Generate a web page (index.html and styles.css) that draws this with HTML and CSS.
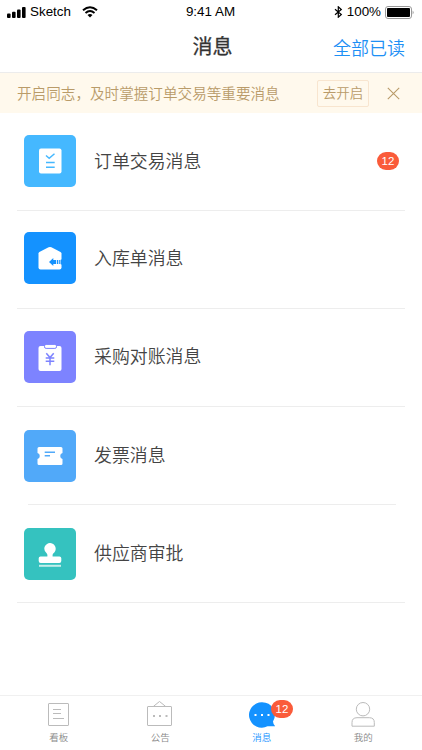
FILE: index.html
```
<!DOCTYPE html>
<html lang="zh-CN">
<head>
  <meta charset="UTF-8">
  <meta name="viewport" content="width=device-width, initial-scale=1.0">
  <title>消息</title>
  <link rel="stylesheet" href="styles.css">
</head>
<body>
  <div class="status">
    <div class="status-left">
      <svg width="19" height="11" viewBox="0 0 19 11">
        <rect x="0" y="6.5" width="3.6" height="4.5" rx="1"/>
        <rect x="5" y="4.7" width="3.6" height="6.3" rx="1"/>
        <rect x="10" y="2.5" width="3.6" height="8.5" rx="1"/>
        <rect x="15" y="0" width="3.6" height="11" rx="1"/>
      </svg>
      <span class="carrier">Sketch</span>
      <svg class="wifi" width="16" height="12" viewBox="0 0 16 12">
        <path d="M1 4.3Q8-1.7 15 4.3M3.5 6.9Q8 3.2 12.5 6.9" fill="none" stroke="#000" stroke-width="2"/>
        <path d="M5.5 9Q8 7 10.5 9L8 11.6Z"/>
      </svg>
    </div>
    <span class="time">9:41 AM</span>
    <div class="status-right">
      <svg width="9" height="12" viewBox="0 0 9 12">
        <path d="M1 3.3L7.3 8.5L4.3 11.2V.8L7.3 3.5L1 8.7" fill="none" stroke="#000" stroke-width="1.2"/>
      </svg>
      <span class="percent">100%</span>
      <svg width="29" height="13" viewBox="0 0 29 13">
        <rect x=".5" y=".5" width="26" height="12" rx="2.5" fill="none" stroke="#999"/>
        <rect x="2" y="2" width="23" height="9" rx="1"/>
        <path d="M27.6 4.5Q29.6 6.5 27.6 8.5Z" fill="#999"/>
      </svg>
    </div>
  </div>

  <header class="header">
    <h1>消息</h1>
    <a class="read-all">全部已读</a>
  </header>

  <div class="notice">
    <span class="notice-text">开启同志，及时掌握订单交易等重要消息</span>
    <a class="notice-btn">去开启</a>
    <svg class="close" width="13" height="13" viewBox="0 0 13 13">
      <path d="M.8.8L12.2 12.2M12.2.8L.8 12.2" fill="none" stroke="#b99b69" stroke-width="1.1"/>
    </svg>
  </div>

  <main class="list">
    <div class="item">
      <div class="icon order">
        <svg width="52" height="52" viewBox="0 0 52 52">
          <rect x="15" y="13.5" width="22.5" height="25" rx="2" fill="#fff"/>
          <path d="M22 20.5L25.2 23.3L30.5 18.8M22 27.5H30.7M22 32.3H30.7" fill="none" stroke="#45b8ff" stroke-width="1.5"/>
        </svg>
      </div>
      <span class="name">订单交易消息</span>
      <span class="badge">12</span>
    </div>
    <div class="item high">
      <div class="icon stock">
        <svg width="52" height="52" viewBox="0 0 52 52">
          <path d="M14.5 21.6Q14.5 20.6 15.4 20L24.6 15.3Q26 14.6 27.4 15.3L36.5 20Q37.5 20.6 37.5 21.6V35.5Q37.5 37.5 35.5 37.5H16.5Q14.5 37.5 14.5 35.5Z" fill="#fff"/>
          <path d="M25 30L29.3 26V28H32.2V32H29.3V34ZM33 28H34.3V32H33ZM35.2 28H36.3V32H35.2ZM36.8 27.5H38V32.5H36.8Z" fill="#1492ff"/>
        </svg>
      </div>
      <span class="name">入库单消息</span>
    </div>
    <div class="item">
      <div class="icon bill">
        <svg width="52" height="52" viewBox="0 0 52 52">
          <rect x="14.5" y="15" width="23" height="25" rx="2" fill="#fff"/>
          <rect x="20.5" y="13.4" width="12" height="4" rx="1.6" fill="#fff" stroke="#7d83ff"/>
          <path d="M22.3 22.3L26 26.5L29.7 22.3M21.7 27H30.3M21.7 30.2H30.3M26 26.5V34.3" fill="none" stroke="#7d83ff" stroke-width="1.5"/>
        </svg>
      </div>
      <span class="name">采购对账消息</span>
    </div>
    <div class="item low inset">
      <div class="icon invoice">
        <svg width="52" height="52" viewBox="0 0 52 52">
          <path d="M15 17H37Q38.5 17 38.5 18.5V23Q36.2 23.5 36.2 26T38.5 29V33.5Q38.5 35 37 35H15Q13.5 35 13.5 33.5V29Q15.8 28.5 15.8 26T13.5 23V18.5Q13.5 17 15 17Z" fill="#fff"/>
          <path d="M20.7 22.2H31M20.7 25.7H26" fill="none" stroke="#51a9f9" stroke-width="1.4"/>
        </svg>
      </div>
      <span class="name">发票消息</span>
    </div>
    <div class="item low">
      <div class="icon supplier">
        <svg width="52" height="52" viewBox="0 0 52 52">
          <path d="M20.3 20.8A5.7 5.7 0 1 1 29.2 25.5Q28.3 26.3 28.6 28.5H35.5Q37.3 28.5 37.3 30.3V33Q37.3 35 35.3 35H16.7Q14.7 35 14.7 33V30.3Q14.7 28.5 16.5 28.5H23.4Q23.7 26.3 22.8 25.5Q20.3 23.8 20.3 20.8Z" fill="#fff"/>
          <path d="M15 37.8H37" stroke="#c5eeeb" stroke-width="2"/>
        </svg>
      </div>
      <span class="name">供应商审批</span>
    </div>
  </main>

  <nav class="tabs">
    <a class="tab">
      <svg width="28" height="28" viewBox="0 0 28 28">
        <rect x="3.5" y="3.5" width="20" height="22" rx=".5"/>
        <path d="M8 9.5H16M8 13.5H16M8 18.5H19"/>
      </svg>
      <span>看板</span>
    </a>
    <a class="tab">
      <svg width="28" height="28" viewBox="0 0 28 28">
        <rect x="1.5" y="6.5" width="24" height="19" rx=".5"/>
        <path d="M7.5 6.3L13.5 1.5L19.5 6.3"/>
        <path class="dots" d="M7 16H9M13 16H15M19.5 16H21.5"/>
      </svg>
      <span>公告</span>
    </a>
    <a class="tab active">
      <svg width="28" height="28" viewBox="0 0 28 28">
        <path class="bubble" d="M14 2.3A12.7 12.7 0 1 0 19.5 26.3H27.2Q25.3 25 25 21.5A12.7 12.7 0 0 0 14 2.3Z"/>
        <path class="dots" d="M6.5 15H8.5M13 15H15M19.5 15H21.5"/>
      </svg>
      <span>消息</span>
      <span class="badge tab-badge">12</span>
    </a>
    <a class="tab">
      <svg width="28" height="28" viewBox="0 0 28 28">
        <circle cx="14" cy="9.2" r="6.7"/>
        <path d="M3 26.2V22.5Q3 17.7 8 17.7H20.3Q25.3 17.7 25.3 22.5V26.2Z"/>
      </svg>
      <span>我的</span>
    </a>
  </nav>
</body>
</html>
```

FILE: styles.css
```
* {
  box-sizing: border-box;
}
body {
  margin: 0;
  height: 750px;
  display: flex;
  flex-direction: column;
  overflow: hidden;
  font-family: "Liberation Sans", "Noto Sans CJK SC", sans-serif;
  font-weight: 350;
  color: #444;
  background-color: #fff;
}
svg {
  display: block;
  flex: none;
}
.status {
  display: grid;
  grid-template-columns: 1fr auto 1fr;
  align-items: center;
  height: 24px;
  padding: 0 8px 0 7px;
  font-size: 13.4px;
  line-height: 24px;
  color: #000;
}
.status-left, .status-right {
  display: flex;
  align-items: center;
}
.status-right {
  justify-content: flex-end;
}
.carrier {
  margin: 0 11px 0 4px;
}
.percent {
  margin: 0 4px 0 4px;
}
.header {
  display: grid;
  grid-template-columns: 1fr auto 1fr;
  align-items: center;
  height: 49px;
  padding: 0 17px;
  border-bottom: 1px solid #ececec;
}
h1 {
  grid-column: 2;
  margin: 0 0 2px 3px;
  font-size: 20px;
  line-height: 30px;
  font-weight: 400;
  -webkit-text-stroke: 0.3px #333;
  color: #333;
}
.read-all {
  justify-self: end;
  margin-bottom: 2px;
  font-size: 18px;
  color: #1e90f5;
}
.notice {
  display: flex;
  align-items: center;
  height: 40px;
  padding: 0 22px 0 17px;
  font-size: 14.6px;
  color: #b99b69;
  background-color: #fff9ed;
}
.notice-text {
  margin-bottom: 2px;
  white-space: nowrap;
}
.notice-btn {
  width: 52px;
  height: 27px;
  margin: 0 18px 0 auto;
  border: 1px solid #f8e5cf;
  border-radius: 2px;
  font-size: 13.5px;
  line-height: 26px;
  text-align: center;
}
.list {
  flex: 1;
  padding: 0 17px;
}
.item {
  display: flex;
  align-items: center;
  height: 98px;
  padding: 0 6px 2px 7px;
  border-bottom: 1px solid #ededed;
}
.high {
  padding-bottom: 4px;
}
.low {
  padding-bottom: 0;
}
.inset {
  margin: 0 9px 0 11px;
  padding: 0;
}
.inset .icon {
  margin-left: -4px;
}
.icon {
  width: 52px;
  height: 52px;
  margin-right: 18px;
  border-radius: 5px;
}
.order {
  background-color: #45b8ff;
}
.stock {
  background-color: #1492ff;
}
.bill {
  background-color: #7d83ff;
}
.invoice {
  background-color: #51a9f9;
}
.supplier {
  background-color: #35c2bf;
}
.name {
  margin-bottom: 3px;
  font-size: 17.9px;
}
.order + .name, .stock + .name {
  margin-bottom: 1px;
}
.badge {
  width: 22px;
  height: 18px;
  margin-left: auto;
  border-radius: 9px;
  background-color: #fa5b3a;
  color: #fff;
  font-size: 11.5px;
  line-height: 18px;
  text-align: center;
}
.tabs {
  display: flex;
  height: 55px;
  padding: 0 8px;
  border-top: 1px solid #f0f0f0;
}
.tab {
  position: relative;
  flex: 1;
  display: flex;
  flex-direction: column;
  align-items: center;
  padding-top: 4px;
  font-size: 9.5px;
  line-height: 14px;
  color: #888;
}
.tab svg {
  margin-bottom: 3px;
  fill: none;
  stroke: #bbb;
}
.tab .dots {
  stroke-width: 2;
}
.active {
  color: #1492ff;
}
.active .bubble {
  fill: #1492ff;
  stroke: none;
}
.tab.active .dots {
  stroke: #fff;
}
.tab-badge {
  position: absolute;
  top: 4px;
  left: 60px;
}
```
